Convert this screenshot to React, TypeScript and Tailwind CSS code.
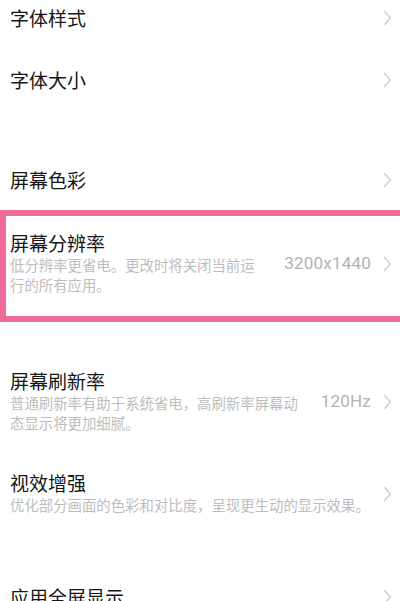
import React from 'react';

const Chevron = () => (
  <svg width="9" height="16" viewBox="0 0 9 16" className="shrink-0">
    <polyline
      points="1.5,1.5 7.5,8 1.5,14.5"
      fill="none"
      stroke="#cfcfcf"
      strokeWidth="1.4"
      strokeLinecap="round"
      strokeLinejoin="round"
    />
  </svg>
);

interface RowProps {
  title: string;
  sub?: string;
  subWidth?: string;
  value?: string;
  inset?: boolean;
  className?: string;
}

const Row = ({ title, sub, subWidth = 'w-[370px]', value, inset, className = '' }: RowProps) => (
  <div
    className={`flex flex-row items-center pr-[8px] ${inset ? 'pl-[4px]' : 'pl-[10px]'} ${className}`}
  >
    <div className="flex-1 flex flex-col">
      <div className="text-[19px] leading-[22px] text-[#161616]">{title}</div>
      {sub && (
        <div className={`mt-[1px] text-[14.4px] leading-[20px] text-[#bdbdbd] ${subWidth}`}>
          {sub}
        </div>
      )}
    </div>
    {value && (
      <div className="mr-[12px] text-[17px] text-[#b2b2b2] font-['Roboto',sans-serif] tracking-[0.2px]">
        {value}
      </div>
    )}
    <Chevron />
  </div>
);

export default function App() {
  return (
    <div className="w-[400px] h-[601px] overflow-hidden bg-white font-['Noto_Sans_CJK_SC','Noto_Sans',sans-serif]">
      <Row title="字体样式" className="h-[35px]" />
      <Row title="字体大小" className="h-[90px]" />
      <div className="h-[25px]" />
      <Row title="屏幕色彩" className="h-[60px]" />
      <div className="border-y-[6px] border-l-[6px] border-[#f06a9b] h-[112px] pt-[16px]">
        <Row
          title="屏幕分辨率"
          sub="低分辨率更省电。更改时将关闭当前运行的所有应用。"
          subWidth="w-[250px]"
          value="3200x1440"
          inset
        />
      </div>
      <div className="h-[48px]" />
      <Row
        title="屏幕刷新率"
        sub="普通刷新率有助于系统省电，高刷新率屏幕动态显示将更加细腻。"
        subWidth="w-[292px]"
        value="120Hz"
      />
      <div className="h-[39px]" />
      <Row
        title="视效增强"
        sub="优化部分画面的色彩和对比度，呈现更生动的显示效果。"
        subWidth="w-[370px]"
      />
      <div className="h-[71px]" />
      <Row title="应用全屏显示" />
    </div>
  );
}
